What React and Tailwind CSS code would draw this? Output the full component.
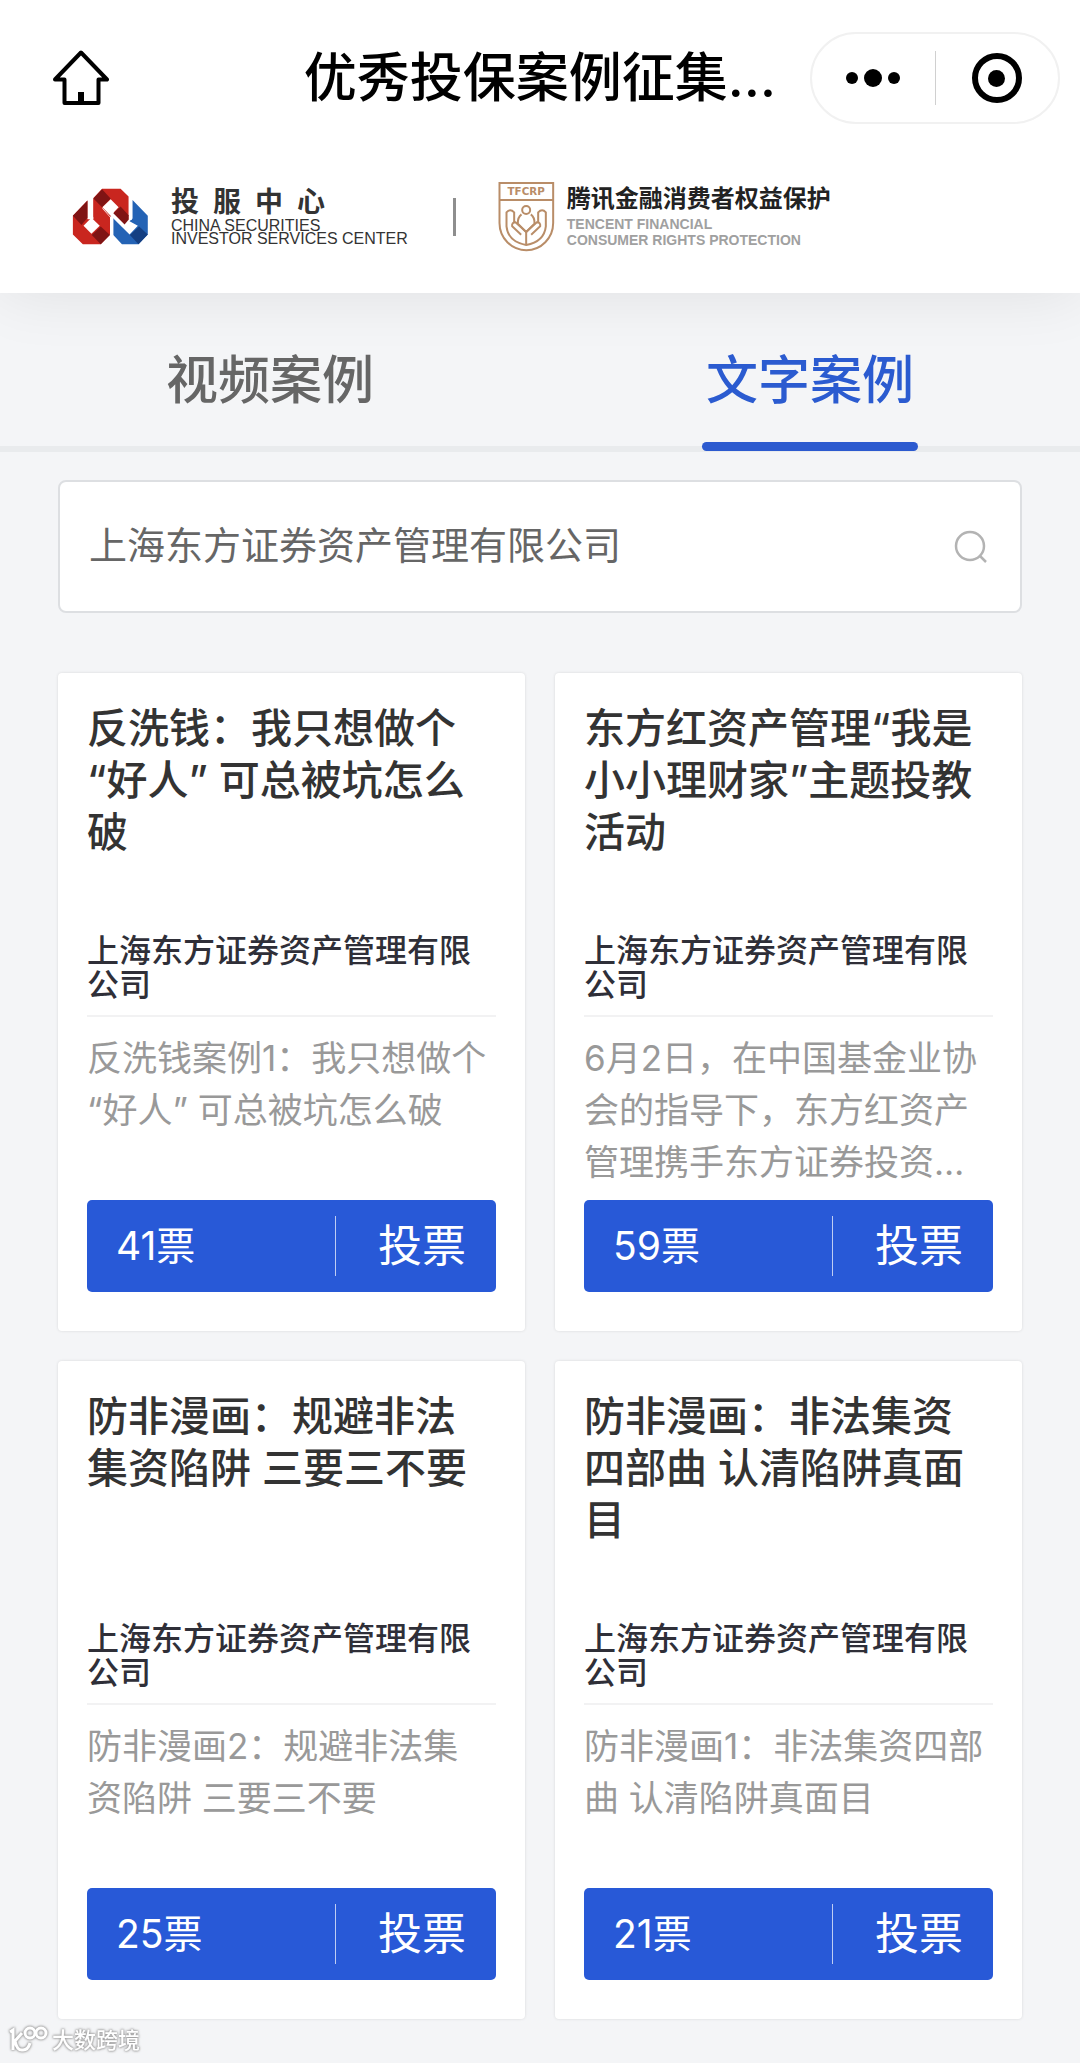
import React from "react";

const ORG = "上海东方证券资产管理有限公司";

const cases = [
  {
    title: "反洗钱：我只想做个\n“好人” 可总被坑怎么\n破",
    text: "反洗钱案例1：我只想做个\n“好人” 可总被坑怎么破",
    votes: 41,
  },
  {
    title: "东方红资产管理“我是\n小小理财家”主题投教\n活动",
    text: "6月2日，在中国基金业协\n会的指导下，东方红资产\n管理携手东方证券投资…",
    votes: 59,
  },
  {
    title: "防非漫画：规避非法\n集资陷阱 三要三不要",
    text: "防非漫画2：规避非法集\n资陷阱 三要三不要",
    votes: 25,
  },
  {
    title: "防非漫画：非法集资\n四部曲 认清陷阱真面\n目",
    text: "防非漫画1：非法集资四部\n曲 认清陷阱真面目",
    votes: 21,
  },
];

function HomeIcon() {
  return (
    <svg viewBox="0 0 56 56" className="h-14 w-14" fill="none" stroke="#000" strokeWidth="4" strokeLinejoin="round">
      <path d="M28 2.500 54 29.500H45.500V53H11.500V29.500H2Z" />
      <path d="M28 42V53" strokeWidth="6" />
    </svg>
  );
}

function IscLogo() {
  return (
    <svg viewBox="12 14 231 172" className="h-[57px] w-[77px] shrink-0">
      <path d="M58 52 14 98V154L44 184H98L126 154V102L76 46V108H58Z" fill="#c9261f" />
      <path d="M102 16H158L182 40V108L170 122 136 90 128 102 104 74 76 102V44Z" fill="#c9261f" />
      <path d="M58 52V104L40 126 14 98Z" fill="#7f1414" />
      <path d="M102 18 128 46 102 72 76 46Z" fill="#7f1414" />
      <path d="M98 130 126 156 98 184 71 156Z" fill="#7f1414" />
      <path d="M194 50 240 98V154L212 184H162L136 156V102L166 132 194 106Z" fill="#2463b5" />
      <path d="M214 130 240 154 212 184 186 156Z" fill="#143f82" />
      <path d="M70 104 95 128 70 152 46 128Z" fill="#fff" />
      <path d="M128 48 152 72 137 88 210 128 185 154 128 98 103 72Z" fill="#fff" />
      <path d="M158 70 182 96V110L170 124 136 90Z" fill="#7f1414" />
      <path d="M67 48V106M131 100V158M188 44V110" stroke="#fff" strokeWidth="9" />
    </svg>
  );
}

function TfcrpLogo() {
  return (
    <svg viewBox="54 34 170 213" className="h-[71px] w-[57px] shrink-0" fill="none" stroke="#b98d68" strokeWidth="6">
      <path d="M58 40H219V160A80 81 0 0 1 58 160ZM58 91H219" />
      <circle cx="138" cy="121" r="12" />
      <path d="M124 134Q112 143 113 162L138 187 163 162Q164 143 152 134" />
      <path d="M138 186V226" />
      <path d="M123 195 96 170Q94 158 106 158L138 187 170 158Q182 158 180 170L153 195" />
      <path d="M102 158V128Q90 116 79 128V170Q84 216 138 226Q192 216 197 170V128Q186 116 174 128V158" />
      <text x="138" y="77" textAnchor="middle" fontSize="31" fontWeight="700" fill="#b98d68" stroke="none" className="font-['DejaVu_Sans',sans-serif]">
        TFCRP
      </text>
    </svg>
  );
}

function CaseCard({ item }) {
  return (
    <article className="flex flex-col rounded-sm bg-white px-[29px] pt-[29px] pb-[39px] shadow-[0_0_3px_rgba(0,0,0,0.12)]">
      <h2 className="min-h-[232px] whitespace-pre text-[41px] leading-[52px] font-medium text-[#333]">{item.title}</h2>
      <p className="border-b-2 border-[#f2f2f3] pb-[13px] text-[32px] leading-[34px] font-medium text-[#2f2f38]">{ORG}</p>
      <p className="mt-[15px] mb-3 min-h-[156px] whitespace-pre text-[35px] leading-[52px] text-[#999]">{item.text}</p>
      <div className="mt-auto flex h-[92px] items-center rounded-[5px] bg-[#2859d7] text-white">
        <span className="flex-1 pl-[29px] text-[39px]">{item.votes}票</span>
        <span className="h-[60px] w-px bg-white/70" />
        <button type="button" className="h-full w-[160px] pl-3 text-[44px] leading-none">投票</button>
      </div>
    </article>
  );
}

export default function App() {
  return (
    <div lang="zh-CN" className="min-h-screen bg-[#f4f5f7] font-['Inter','Noto_Sans_CJK_SC',sans-serif]">
      <header className="relative bg-white pb-[41px] shadow-[0_0_60px_rgba(0,0,0,0.09)]">
        <div className="flex items-center justify-between pt-8 pr-5 pl-[53px]">
          <a href="#home" aria-label="首页"><HomeIcon /></a>
          <h1 className="ml-auto mr-[34px] text-[53px] leading-[91px] font-medium text-black">优秀投保案例征集…</h1>
          <div className="flex h-[92px] w-[250px] items-center rounded-full border-2 border-[#f1f1f1]">
            <button type="button" aria-label="更多" className="flex flex-1 items-center justify-center gap-[6px]">
              <span className="size-3 rounded-full bg-black" />
              <span className="size-[18px] rounded-full bg-black" />
              <span className="size-3 rounded-full bg-black" />
            </button>
            <span className="h-[54px] w-px bg-[#d0d0d0]" />
            <button type="button" aria-label="关闭" className="flex flex-1 justify-center">
              <span className="flex size-[50px] items-center justify-center rounded-full border-[6px] border-black">
                <span className="size-[17px] rounded-full bg-black" />
              </span>
            </button>
          </div>
        </div>
        <div className="mt-[57px] flex items-center pl-[72px]">
          <div className="flex items-center">
            <IscLogo />
            <div className="-mt-1 ml-[22px] text-[#333]">
              <div className="flex gap-[14px] text-[28px] leading-[34px] font-bold">
                <span>投</span><span>服</span><span>中</span><span>心</span>
              </div>
              <p className="font-['Liberation_Sans',sans-serif] text-base leading-[13px]">
                CHINA SECURITIES<br />INVESTOR SERVICES CENTER
              </p>
            </div>
          </div>
          <span className="ml-[45px] h-[38px] w-[3px] bg-[#8e8e8e]" />
          <div className="ml-[42px] flex items-center">
            <TfcrpLogo />
            <div className="-mt-1 ml-3">
              <p className="text-[24px] leading-[34px] font-bold text-[#222]">腾讯金融消费者权益保护</p>
              <p className="font-['Liberation_Sans',sans-serif] text-[14px] leading-4 font-bold text-[#a0a0a0]">
                TENCENT FINANCIAL<br />CONSUMER RIGHTS PROTECTION
              </p>
            </div>
          </div>
        </div>
      </header>

      <nav className="relative flex border-b-[6px] border-[#e9ebed] text-[52px] font-medium">
        <a href="#video" className="flex-1 pt-[50px] text-center leading-[76px] text-[#666]">视频案例</a>
        <a href="#text" aria-current="page" className="-mb-[5px] flex flex-1 flex-col items-center pt-[50px] leading-[76px] text-[#2b5bd0]">
          文字案例
          <span className="mt-[23px] h-[9px] w-[216px] rounded-full bg-[#2c5acf]" />
        </a>
      </nav>

      <main className="px-[58px] pt-7">
        <form className="flex h-[133px] items-center rounded-lg border-2 border-[#dddfe2] bg-white pr-8 pb-[3px] pl-[29px]">
          <input aria-label="搜索机构" defaultValue={ORG} className="min-w-0 flex-1 bg-transparent text-[38px] text-[#666] outline-none" />
          <button type="submit" aria-label="搜索" className="pt-[3px]">
            <svg viewBox="0 0 34 34" className="size-[34px]" fill="none" stroke="#b3b3b3" strokeWidth="2.500">
              <circle cx="16" cy="16" r="14" />
              <path d="m26 26 6 6" />
            </svg>
          </button>
        </form>
        <section className="mt-[60px] grid grid-cols-2 gap-[30px]">
          {cases.map((item) => <CaseCard key={item.title} item={item} />)}
        </section>
      </main>

      <footer className="flex h-[42px] items-center gap-1 pl-2 text-white [filter:drop-shadow(0_0_1px_#999)_drop-shadow(0_0_1px_#aaa)]">
        <svg viewBox="0 0 40 30" className="h-[30px] w-10" fill="none" stroke="#fff" strokeWidth="3">
          <path d="M2 7 5 5V25M14 8 7 16Q9 26 15 25 20 25 22 18" />
          <circle cx="22" cy="8" r="5" />
          <circle cx="33" cy="8" r="5" />
        </svg>
        <span className="text-[22px] leading-none font-medium">大数跨境</span>
      </footer>
    </div>
  );
}
